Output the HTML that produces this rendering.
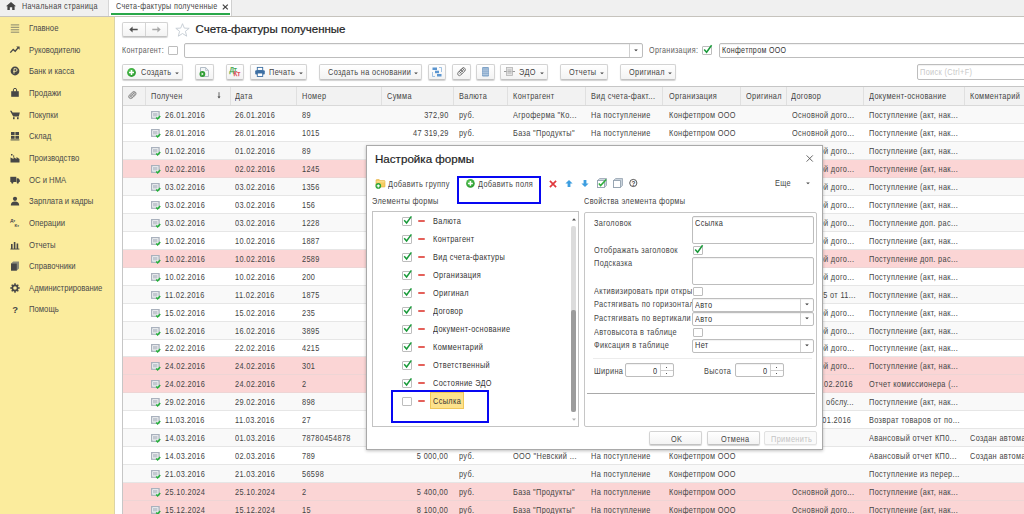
<!DOCTYPE html><html><head><meta charset="utf-8"><style>
*{box-sizing:border-box}
html,body{margin:0;padding:0}
body{width:1024px;height:514px;overflow:hidden;position:relative;background:#fff;font-family:"Liberation Sans",sans-serif;font-size:8px;color:#444}
.t{position:absolute;white-space:nowrap;line-height:10px;font-size:8px}
.btn{position:absolute;height:16px;border:1px solid #d3d3d3;border-bottom-color:#c2c2c2;border-radius:2px;background:linear-gradient(#fff,#f3f3f3);box-shadow:0 1px 1px rgba(0,0,0,.18)}
.cb{position:absolute;width:10px;height:9px;border:1px solid #bdbdbd;border-radius:1px;background:#fff}
.inp{position:absolute;border:1px solid #bdbdbd;border-radius:2px;background:#fff;box-shadow:inset 0 1px 1px rgba(0,0,0,.06)}
svg{position:absolute;overflow:visible}
</style></head><body>
<div style="position:absolute;left:0px;top:0px;width:1024px;height:16px;background:#f0f0f0"></div>
<div style="position:absolute;left:0px;top:16px;width:1024px;height:1px;background:#c6c3bd"></div>
<svg style="left:6px;top:2px" width="10" height="8" viewBox="0 0 10 8"><path d="M5 0 L10 4.2 H8.6 V8 H6.2 V5.3 H3.8 V8 H1.4 V4.2 H0 Z" fill="#444"/></svg>
<div class="t " style="left:22px;top:1px;font-size:9.2px;line-height:10px;transform:scaleX(0.7850);transform-origin:0 0;letter-spacing:0.43px;color:#444;">Начальная страница</div>
<div style="position:absolute;left:108px;top:0px;width:1px;height:16px;background:#d6d6d6"></div>
<div style="position:absolute;left:109px;top:0px;width:122px;height:16px;background:#fff"></div>
<div style="position:absolute;left:231px;top:0px;width:1px;height:16px;background:#d0d0d0"></div>
<div style="position:absolute;left:111px;top:13px;width:119px;height:2px;background:#2aa84a"></div>
<div class="t " style="left:115.5px;top:1px;font-size:9.2px;line-height:10px;transform:scaleX(0.7800);transform-origin:0 0;letter-spacing:0.43px;color:#444;">Счета-фактуры полученные</div>
<svg style="left:221.5px;top:3.5px" width="7" height="6" viewBox="0 0 7 6"><path d="M0.8 0.6 L5.8 5.4 M5.8 0.6 L0.8 5.4" stroke="#444" stroke-width="1.2"/></svg>
<div style="position:absolute;left:0px;top:17px;width:114px;height:497px;background:#fbec9d"></div>
<div style="position:absolute;left:114px;top:17px;width:1px;height:497px;background:#dcd4a4"></div>
<div class="t " style="left:28.5px;top:23px;font-size:8.8px;line-height:10px;transform:scaleX(0.8750);transform-origin:0 0;color:#4a4a4a;">Главное</div>
<svg style="left:10px;top:22.5px" width="10" height="10" viewBox="0 0 10 10"><path d="M0.8 1.9H9.2M0.8 4.3H9.2M0.8 6.8H9.2M0.8 9.2H9.2" stroke="#7a7a6a" stroke-width="0.9"/></svg>
<div class="t " style="left:28.5px;top:45px;font-size:8.8px;line-height:10px;transform:scaleX(0.8750);transform-origin:0 0;color:#4a4a4a;">Руководителю</div>
<svg style="left:10px;top:44.5px" width="10" height="10" viewBox="0 0 10 10"><path d="M0.3 7.6 L3.2 4.4 L5.2 6.2 L8.2 2.6" stroke="#474747" stroke-width="1.4" fill="none"/><path d="M6.2 1.4 H9.6 V4.8Z" fill="#474747"/></svg>
<div class="t " style="left:28.5px;top:66px;font-size:8.8px;line-height:10px;transform:scaleX(0.8750);transform-origin:0 0;color:#4a4a4a;">Банк и касса</div>
<svg style="left:10px;top:65.5px" width="10" height="10" viewBox="0 0 10 10"><circle cx="5" cy="5" r="4.4" fill="#474747"/><path d="M4 7.6V2.6H5.6Q7 2.6 7 4Q7 5.4 5.6 5.4H3.2" stroke="#e8dca0" stroke-width="1" fill="none"/></svg>
<div class="t " style="left:28.5px;top:88px;font-size:8.8px;line-height:10px;transform:scaleX(0.8750);transform-origin:0 0;color:#4a4a4a;">Продажи</div>
<svg style="left:10px;top:87.5px" width="10" height="10" viewBox="0 0 10 10"><path d="M1.2 3.2H8.8V8.8H1.2Z" fill="#474747"/><path d="M3.4 3.8V1.8Q3.4 0.4 5 0.4Q6.6 0.4 6.6 1.8V3.8" stroke="#474747" stroke-width="1" fill="none"/></svg>
<div class="t " style="left:28.5px;top:110px;font-size:8.8px;line-height:10px;transform:scaleX(0.8750);transform-origin:0 0;color:#4a4a4a;">Покупки</div>
<svg style="left:10px;top:109.5px" width="10" height="10" viewBox="0 0 10 10"><path d="M0 0.8H1.6L2.6 2.6H9.8L8.8 6.4H3.2Z" fill="#474747"/><rect x="3" y="7.2" width="1.6" height="2" fill="#474747"/><rect x="7" y="7.2" width="1.6" height="2" fill="#474747"/></svg>
<div class="t " style="left:28.5px;top:131px;font-size:8.8px;line-height:10px;transform:scaleX(0.8750);transform-origin:0 0;color:#4a4a4a;">Склад</div>
<svg style="left:10px;top:130.5px" width="10" height="10" viewBox="0 0 10 10"><rect x="1" y="1" width="3.6" height="3" fill="#474747"/><rect x="5.4" y="1" width="3.6" height="3" fill="#474747"/><rect x="1" y="4.8" width="3.6" height="3" fill="#474747"/><rect x="5.4" y="4.8" width="3.6" height="3" fill="#474747"/><rect x="0.6" y="8.3" width="8.8" height="1.2" fill="#6a6a5a"/></svg>
<div class="t " style="left:28.5px;top:153px;font-size:8.8px;line-height:10px;transform:scaleX(0.8750);transform-origin:0 0;color:#4a4a4a;">Производство</div>
<svg style="left:10px;top:152.5px" width="10" height="10" viewBox="0 0 10 10"><path d="M0.5 9.5V4.5L3.5 6V4L6.5 6V4L9.5 6V9.5Z" fill="#474747"/><rect x="1" y="1" width="1.5" height="1.5" fill="#474747"/><rect x="3" y="2.5" width="1.2" height="1.2" fill="#474747"/></svg>
<div class="t " style="left:28.5px;top:175px;font-size:8.8px;line-height:10px;transform:scaleX(0.8750);transform-origin:0 0;color:#4a4a4a;">ОС и НМА</div>
<svg style="left:10px;top:174.5px" width="10" height="10" viewBox="0 0 10 10"><rect x="0.3" y="1.8" width="6" height="5.2" fill="#474747"/><path d="M6.6 3.2H8.4L9.8 5V7H6.6Z" fill="#474747"/><circle cx="2.3" cy="7.6" r="1.1" fill="#474747"/><circle cx="7.8" cy="7.6" r="1.1" fill="#474747"/></svg>
<div class="t " style="left:28.5px;top:196px;font-size:8.8px;line-height:10px;transform:scaleX(0.8750);transform-origin:0 0;color:#4a4a4a;">Зарплата и кадры</div>
<svg style="left:10px;top:195.5px" width="10" height="10" viewBox="0 0 10 10"><circle cx="5" cy="2.8" r="2.1" fill="#474747"/><path d="M0.8 9.4Q0.8 5.6 5 5.6Q9.2 5.6 9.2 9.4Z" fill="#474747"/></svg>
<div class="t " style="left:28.5px;top:218px;font-size:8.8px;line-height:10px;transform:scaleX(0.8750);transform-origin:0 0;color:#4a4a4a;">Операции</div>
<svg style="left:10px;top:217.5px" width="10" height="10" viewBox="0 0 10 10"><text x="0.2" y="4.4" font-family="Liberation Sans" font-size="4.4" font-weight="bold" fill="#474747">Дт</text><text x="4.4" y="9.2" font-family="Liberation Sans" font-size="4.4" font-weight="bold" fill="#474747">Кт</text></svg>
<div class="t " style="left:28.5px;top:240px;font-size:8.8px;line-height:10px;transform:scaleX(0.8750);transform-origin:0 0;color:#4a4a4a;">Отчеты</div>
<svg style="left:10px;top:239.5px" width="10" height="10" viewBox="0 0 10 10"><rect x="1" y="4" width="1.6" height="5" fill="#474747"/><rect x="3.8" y="2" width="1.6" height="7" fill="#474747"/><rect x="6.6" y="3.5" width="1.6" height="5.5" fill="#474747"/><rect x="0.4" y="8.6" width="9" height="0.9" fill="#474747"/></svg>
<div class="t " style="left:28.5px;top:261px;font-size:8.8px;line-height:10px;transform:scaleX(0.8750);transform-origin:0 0;color:#4a4a4a;">Справочники</div>
<svg style="left:10px;top:260.5px" width="10" height="10" viewBox="0 0 10 10"><path d="M1 2.6L3.2 0.6H9V7.6L6.8 9.6H1Z" fill="#8a8a7a"/><rect x="1" y="2.6" width="5.8" height="7" fill="#474747"/></svg>
<div class="t " style="left:28.5px;top:283px;font-size:8.8px;line-height:10px;transform:scaleX(0.8750);transform-origin:0 0;color:#4a4a4a;">Администрирование</div>
<svg style="left:10px;top:282.5px" width="10" height="10" viewBox="0 0 10 10"><circle cx="5" cy="5" r="2.6" fill="none" stroke="#474747" stroke-width="1.6"/><path d="M5 0.3V2M5 8V9.7M0.3 5H2M8 5H9.7M1.7 1.7L2.9 2.9M7.1 7.1L8.3 8.3M8.3 1.7L7.1 2.9M2.9 7.1L1.7 8.3" stroke="#474747" stroke-width="1.5"/></svg>
<div class="t " style="left:28.5px;top:304px;font-size:8.8px;line-height:10px;transform:scaleX(0.8750);transform-origin:0 0;color:#4a4a4a;">Помощь</div>
<svg style="left:10px;top:303.5px" width="10" height="10" viewBox="0 0 10 10"><text x="2.2" y="9" font-family="Liberation Sans" font-size="9.5" font-weight="bold" fill="#474747">?</text></svg>
<div class="btn" style="left:122px;top:22px;width:46px;height:15px"></div>
<div style="position:absolute;left:145px;top:23px;width:1px;height:13px;background:#d4d4d4"></div>
<svg style="left:129px;top:26px" width="9" height="7" viewBox="0 0 9 7"><path d="M0.3 3.5 L3.6 0.4 V2.7 H8.7 V4.3 H3.6 V6.6 Z" fill="#505050"/></svg>
<svg style="left:151.5px;top:26px" width="9" height="7" viewBox="0 0 9 7"><path d="M8.7 3.5 L5.4 0.4 V2.7 H0.3 V4.3 H5.4 V6.6 Z" fill="#a8a8a8"/></svg>
<svg style="left:174.5px;top:22.5px" width="15" height="14" viewBox="0 0 15 14"><path d="M7.5 0.7 L9.3 5.1 L14.2 5.3 L10.4 8.3 L11.7 13.2 L7.5 10.5 L3.3 13.2 L4.6 8.3 L0.8 5.3 L5.7 5.1 Z" fill="none" stroke="#c3cbd3" stroke-width="0.9" stroke-linejoin="miter"/></svg>
<div class="t " style="left:195.5px;top:23px;font-size:11.5px;line-height:12px;color:#1e1e1e;-webkit-text-stroke:0.2px #1e1e1e;">Счета-фактуры полученные</div>
<div class="t " style="left:122px;top:45px;font-size:9.2px;line-height:10px;transform:scaleX(0.7650);transform-origin:0 0;letter-spacing:0.43px;color:#606060;">Контрагент:</div>
<div class="cb" style="left:168px;top:46px"></div>
<div class="inp" style="left:184px;top:43px;width:459px;height:15px"></div>
<div style="position:absolute;left:629px;top:44px;width:1px;height:13px;background:#d0d0d0"></div>
<div class="t " style="left:649.2px;top:45px;font-size:9.2px;line-height:10px;transform:scaleX(0.7800);transform-origin:0 0;letter-spacing:0.43px;color:#606060;">Организация:</div>
<div class="cb" style="left:702px;top:46px"></div>
<svg style="left:703px;top:44px" width="10" height="10" viewBox="0 0 10 10"><path d="M1.2 5.4 L3.6 8.2 L8.6 1.2" stroke="#1a9a3a" stroke-width="1.5" fill="none"/></svg>
<svg style="left:634px;top:49px" width="4" height="3" viewBox="0 0 4 3"><path d="M0.2 0.4H3.8L2 2.3Z" fill="#333"/></svg>
<div class="inp" style="left:719px;top:43px;width:320px;height:15px"></div>
<div class="t " style="left:721.5px;top:45px;font-size:9.2px;line-height:10px;transform:scaleX(0.7700);transform-origin:0 0;letter-spacing:0.43px;color:#333;">Конфетпром ООО</div>
<div class="btn" style="left:122px;top:64px;width:61px"></div>
<div class="t " style="left:140.5px;top:67px;font-size:9.2px;line-height:10px;transform:scaleX(0.8000);transform-origin:0 0;letter-spacing:0.43px;color:#444;">Создать</div>
<svg style="left:175px;top:72px" width="4" height="3" viewBox="0 0 4 3"><path d="M0.2 0.4H3.8L2 2.3Z" fill="#444"/></svg>
<svg style="left:127px;top:67.5px" width="9" height="9" viewBox="0 0 9 9"><defs><radialGradient id="gp" cx="40%" cy="35%" r="65%"><stop offset="0" stop-color="#5cc95a"/><stop offset="1" stop-color="#2a9a2f"/></radialGradient></defs><circle cx="4.5" cy="4.5" r="4.4" fill="url(#gp)"/><path d="M4.5 2V7M2 4.5H7" stroke="#fff" stroke-width="1.5"/></svg>
<div class="btn" style="left:195px;top:64px;width:19px"></div>
<svg style="left:199px;top:67px" width="11" height="10" viewBox="0 0 11 10"><path d="M1.5 0.5H6.6L9.5 3.4V9.5H1.5Z" fill="#f4f6f8" stroke="#a9b4c0" stroke-width="0.9"/><path d="M6.6 0.5V3.4H9.5" fill="none" stroke="#a9b4c0" stroke-width="0.7"/><circle cx="3.4" cy="7" r="2.9" fill="#2f9e34"/><path d="M2.6 5.6V8.4L4.6 7Z" fill="#fff"/></svg>
<div class="btn" style="left:226px;top:64px;width:18px"></div>
<svg style="left:229px;top:66px" width="12" height="11" viewBox="0 0 12 11"><text x="0.4" y="5.8" font-family="Liberation Sans" font-size="6.6" fill="#3aa54a" stroke="#3aa54a" stroke-width="0.25">Дт</text><text x="4.4" y="10.2" font-family="Liberation Sans" font-size="6.6" fill="#e0454d" stroke="#e0454d" stroke-width="0.25">Кт</text></svg>
<div class="btn" style="left:250px;top:64px;width:57px"></div>
<div class="t " style="left:268.5px;top:67px;font-size:9.2px;line-height:10px;transform:scaleX(0.8000);transform-origin:0 0;letter-spacing:0.43px;color:#444;">Печать</div>
<svg style="left:299px;top:72px" width="4" height="3" viewBox="0 0 4 3"><path d="M0.2 0.4H3.8L2 2.3Z" fill="#444"/></svg>
<svg style="left:255px;top:67px" width="10" height="10" viewBox="0 0 10 10"><rect x="2.3" y="0.4" width="5.4" height="3" fill="#fff" stroke="#3d6fa3" stroke-width="0.9"/><rect x="0.2" y="3.2" width="9.6" height="4.4" rx="1" fill="#3d6fa3"/><rect x="2.3" y="6" width="5.4" height="3.5" fill="#fff" stroke="#3d6fa3" stroke-width="0.9"/></svg>
<div class="btn" style="left:319px;top:64px;width:103px"></div>
<div class="t " style="left:328px;top:67px;font-size:9.2px;line-height:10px;transform:scaleX(0.8000);transform-origin:0 0;letter-spacing:0.43px;color:#444;">Создать на основании</div>
<svg style="left:414px;top:72px" width="4" height="3" viewBox="0 0 4 3"><path d="M0.2 0.4H3.8L2 2.3Z" fill="#444"/></svg>
<div class="btn" style="left:428px;top:64px;width:18px"></div>
<svg style="left:432px;top:67px" width="10" height="10" viewBox="0 0 10 10"><rect x="0.5" y="0.5" width="4.5" height="2.5" fill="#5b95d0"/><rect x="3" y="3.7" width="4" height="2.5" fill="#5b95d0"/><rect x="5" y="7" width="4.5" height="2.5" fill="#5b95d0"/><path d="M0.5 5V9.5H3 M9.5 5V0.5H7" stroke="#8cb4dc" stroke-width="0.8" fill="none"/></svg>
<div class="btn" style="left:452px;top:64px;width:19px"></div>
<svg style="left:456px;top:66px" width="10" height="11" viewBox="0 0 10 11"><path d="M7.5 1.2 L2.2 6.5 Q1 7.9 2.2 9.1 Q3.5 10.3 4.8 9 L9 4.8 Q10 3.4 8.8 2.3 Q7.6 1.2 6.3 2.4 L2.5 6.3 M7.8 3.4 L3.6 7.6 M6 2.1L8.5 4.6 M4.5 3.6 L7 6.1 M3 5.1 L5.5 7.6" stroke="#6b6b6b" stroke-width="0.9" fill="none"/></svg>
<div class="btn" style="left:476px;top:64px;width:19px"></div>
<svg style="left:482px;top:67px" width="7" height="10" viewBox="0 0 7 10"><rect x="0" y="0" width="7" height="9.5" rx="1.2" fill="#7fa3c8"/><path d="M0.5 2H6.5M0.5 3.9H6.5M0.5 5.8H6.5M0.5 7.7H6.5" stroke="#d8e4f0" stroke-width="0.7"/></svg>
<div class="btn" style="left:500px;top:64px;width:48px"></div>
<div class="t " style="left:519px;top:67px;font-size:9.2px;line-height:10px;transform:scaleX(0.8000);transform-origin:0 0;letter-spacing:0.43px;color:#444;">ЭДО</div>
<svg style="left:540px;top:72px" width="4" height="3" viewBox="0 0 4 3"><path d="M0.2 0.4H3.8L2 2.3Z" fill="#444"/></svg>
<svg style="left:504px;top:67px" width="11" height="9" viewBox="0 0 11 9"><rect x="2.5" y="0.5" width="6" height="8" fill="#e4e4e4" stroke="#b4b4b4" stroke-width="0.8"/><path d="M3.5 3H7.5M3.5 4.5H7.5M3.5 6H7.5" stroke="#a0a0a0" stroke-width="0.7"/><path d="M0 4.5H2.5M8.5 4.5H11" stroke="#9a9a9a" stroke-width="1"/></svg>
<div class="btn" style="left:560px;top:64px;width:48px"></div>
<div class="t " style="left:569px;top:67px;font-size:9.2px;line-height:10px;transform:scaleX(0.8000);transform-origin:0 0;letter-spacing:0.43px;color:#444;">Отчеты</div>
<svg style="left:600px;top:72px" width="4" height="3" viewBox="0 0 4 3"><path d="M0.2 0.4H3.8L2 2.3Z" fill="#444"/></svg>
<div class="btn" style="left:620px;top:64px;width:56px"></div>
<div class="t " style="left:629px;top:67px;font-size:9.2px;line-height:10px;transform:scaleX(0.8000);transform-origin:0 0;letter-spacing:0.43px;color:#444;">Оригинал</div>
<svg style="left:667.5px;top:72px" width="4" height="3" viewBox="0 0 4 3"><path d="M0.2 0.4H3.8L2 2.3Z" fill="#444"/></svg>
<div class="inp" style="left:917px;top:64px;width:120px;height:16px"></div>
<div class="t " style="left:920px;top:67px;font-size:9.2px;line-height:10px;transform:scaleX(0.8000);transform-origin:0 0;letter-spacing:0.43px;color:#c8c8c8;">Поиск (Ctrl+F)</div>
<div style="position:absolute;left:122px;top:86px;width:910px;height:1px;background:#c6c6c6"></div>
<div style="position:absolute;left:122px;top:87px;width:910px;height:18px;background:#f2f2f2"></div>
<div style="position:absolute;left:122px;top:105px;width:910px;height:1px;background:#d9d9d9"></div>
<div style="position:absolute;left:122px;top:86px;width:1px;height:428px;background:#c6c6c6"></div>
<div style="position:absolute;left:145px;top:87px;width:1px;height:18px;background:#e0e0e0"></div>
<div style="position:absolute;left:230px;top:87px;width:1px;height:18px;background:#e0e0e0"></div>
<div style="position:absolute;left:296px;top:87px;width:1px;height:18px;background:#e0e0e0"></div>
<div style="position:absolute;left:381px;top:87px;width:1px;height:18px;background:#e0e0e0"></div>
<div style="position:absolute;left:453px;top:87px;width:1px;height:18px;background:#e0e0e0"></div>
<div style="position:absolute;left:507px;top:87px;width:1px;height:18px;background:#e0e0e0"></div>
<div style="position:absolute;left:585px;top:87px;width:1px;height:18px;background:#e0e0e0"></div>
<div style="position:absolute;left:662px;top:87px;width:1px;height:18px;background:#e0e0e0"></div>
<div style="position:absolute;left:740px;top:87px;width:1px;height:18px;background:#e0e0e0"></div>
<div style="position:absolute;left:786px;top:87px;width:1px;height:18px;background:#e0e0e0"></div>
<div style="position:absolute;left:863px;top:87px;width:1px;height:18px;background:#e0e0e0"></div>
<div style="position:absolute;left:964px;top:87px;width:1px;height:18px;background:#e0e0e0"></div>
<div class="t " style="left:150.7px;top:91px;font-size:9.2px;line-height:10px;transform:scaleX(0.8000);transform-origin:0 0;letter-spacing:0.43px;color:#444;">Получен</div>
<div class="t " style="left:234.5px;top:91px;font-size:9.2px;line-height:10px;transform:scaleX(0.8000);transform-origin:0 0;letter-spacing:0.43px;color:#444;">Дата</div>
<div class="t " style="left:301.7px;top:91px;font-size:9.2px;line-height:10px;transform:scaleX(0.8000);transform-origin:0 0;letter-spacing:0.43px;color:#444;">Номер</div>
<div class="t " style="left:386.7px;top:91px;font-size:9.2px;line-height:10px;transform:scaleX(0.8000);transform-origin:0 0;letter-spacing:0.43px;color:#444;">Сумма</div>
<div class="t " style="left:459px;top:91px;font-size:9.2px;line-height:10px;transform:scaleX(0.8000);transform-origin:0 0;letter-spacing:0.43px;color:#444;">Валюта</div>
<div class="t " style="left:513.3px;top:91px;font-size:9.2px;line-height:10px;transform:scaleX(0.8000);transform-origin:0 0;letter-spacing:0.43px;color:#444;">Контрагент</div>
<div class="t " style="left:590.8px;top:91px;font-size:9.2px;line-height:10px;transform:scaleX(0.8000);transform-origin:0 0;letter-spacing:0.43px;color:#444;">Вид счета-факт...</div>
<div class="t " style="left:668.5px;top:91px;font-size:9.2px;line-height:10px;transform:scaleX(0.8000);transform-origin:0 0;letter-spacing:0.43px;color:#444;">Организация</div>
<div class="t " style="left:745.5px;top:91px;font-size:9.2px;line-height:10px;transform:scaleX(0.8000);transform-origin:0 0;letter-spacing:0.43px;color:#444;">Оригинал</div>
<div class="t " style="left:791px;top:91px;font-size:9.2px;line-height:10px;transform:scaleX(0.8000);transform-origin:0 0;letter-spacing:0.43px;color:#444;">Договор</div>
<div class="t " style="left:868.5px;top:91px;font-size:9.2px;line-height:10px;transform:scaleX(0.8000);transform-origin:0 0;letter-spacing:0.43px;color:#444;">Документ-основание</div>
<div class="t " style="left:969.5px;top:91px;font-size:9.2px;line-height:10px;transform:scaleX(0.8000);transform-origin:0 0;letter-spacing:0.43px;color:#444;">Комментарий</div>
<svg style="left:216.5px;top:92px" width="4" height="7" viewBox="0 0 4 7"><path d="M2 0.2V5" stroke="#555" stroke-width="0.9"/><path d="M0.5 4.4 H3.5 L2 6.4Z" fill="#444"/></svg>
<svg style="left:128px;top:91px" width="9" height="8" viewBox="0 0 9 8"><path d="M6.8 0.8 Q8.6 1.4 8 3.2 L4.2 7 Q2.6 8.2 1.2 7 Q0 5.6 1.2 4.2 L5 0.8 Q5.9 0.2 6.8 0.8Z" fill="#d0d0d0" stroke="#777" stroke-width="0.8"/><path d="M2 4.4 L4.8 7 M3.4 3 L6.4 5.6 M4.8 1.6 L7.6 4.2 M1.8 6 L6.8 1.2" stroke="#777" stroke-width="0.6"/></svg>
<div style="position:absolute;left:123px;top:106px;width:901px;height:17px;background:#f9f9f9"></div>
<div style="position:absolute;left:123px;top:123px;width:901px;height:1px;background:#e6e6e6"></div>
<svg style="left:151px;top:110.5px" width="10" height="9" viewBox="0 0 10 9"><rect x="0.65" y="0.65" width="7.4" height="6.6" fill="#fff" stroke="#a9b1bd" stroke-width="1.3"/><rect x="2" y="2" width="4.6" height="3.6" fill="#c2c8d0"/><path d="M5.2 6.5 L6.6 7.9 L9.2 4.9" stroke="#25b03a" stroke-width="1.5" fill="none"/></svg>
<div class="t " style="left:165px;top:110px;font-size:9.2px;line-height:10px;transform:scaleX(0.8000);transform-origin:0 0;letter-spacing:0.43px;">26.01.2016</div>
<div class="t " style="left:234.5px;top:110px;font-size:9.2px;line-height:10px;transform:scaleX(0.8000);transform-origin:0 0;letter-spacing:0.43px;">26.01.2016</div>
<div class="t " style="left:301.7px;top:110px;font-size:9.2px;line-height:10px;transform:scaleX(0.8000);transform-origin:0 0;letter-spacing:0.43px;">89</div>
<div class="t " style="right:575.5px;top:110px;font-size:9.2px;line-height:10px;transform:scaleX(0.8000);transform-origin:100% 0;letter-spacing:0.43px;">372,90</div>
<div class="t " style="left:459px;top:110px;font-size:9.2px;line-height:10px;transform:scaleX(0.8000);transform-origin:0 0;letter-spacing:0.43px;">руб.</div>
<div class="t " style="left:513.3px;top:110px;font-size:9.2px;line-height:10px;transform:scaleX(0.8000);transform-origin:0 0;letter-spacing:0.43px;">Агроферма &quot;Ко...</div>
<div class="t " style="left:590.8px;top:110px;font-size:9.2px;line-height:10px;transform:scaleX(0.8000);transform-origin:0 0;letter-spacing:0.43px;">На поступление</div>
<div class="t " style="left:668.5px;top:110px;font-size:9.2px;line-height:10px;transform:scaleX(0.8000);transform-origin:0 0;letter-spacing:0.43px;">Конфетпром ООО</div>
<div class="t " style="left:792px;top:110px;font-size:9.2px;line-height:10px;transform:scaleX(0.8000);transform-origin:0 0;letter-spacing:0.43px;">Основной дого...</div>
<div class="t " style="left:868.5px;top:110px;font-size:9.2px;line-height:10px;transform:scaleX(0.8000);transform-origin:0 0;letter-spacing:0.43px;">Поступление (акт, нак...</div>
<div style="position:absolute;left:123px;top:124px;width:901px;height:17px;background:#ffffff"></div>
<div style="position:absolute;left:123px;top:141px;width:901px;height:1px;background:#e6e6e6"></div>
<svg style="left:151px;top:128.5px" width="10" height="9" viewBox="0 0 10 9"><rect x="0.65" y="0.65" width="7.4" height="6.6" fill="#fff" stroke="#a9b1bd" stroke-width="1.3"/><rect x="2" y="2" width="4.6" height="3.6" fill="#c2c8d0"/><path d="M5.2 6.5 L6.6 7.9 L9.2 4.9" stroke="#25b03a" stroke-width="1.5" fill="none"/></svg>
<div class="t " style="left:165px;top:128px;font-size:9.2px;line-height:10px;transform:scaleX(0.8000);transform-origin:0 0;letter-spacing:0.43px;">28.01.2016</div>
<div class="t " style="left:234.5px;top:128px;font-size:9.2px;line-height:10px;transform:scaleX(0.8000);transform-origin:0 0;letter-spacing:0.43px;">28.01.2016</div>
<div class="t " style="left:301.7px;top:128px;font-size:9.2px;line-height:10px;transform:scaleX(0.8000);transform-origin:0 0;letter-spacing:0.43px;">1015</div>
<div class="t " style="right:575.5px;top:128px;font-size:9.2px;line-height:10px;transform:scaleX(0.8000);transform-origin:100% 0;letter-spacing:0.43px;">47 319,29</div>
<div class="t " style="left:459px;top:128px;font-size:9.2px;line-height:10px;transform:scaleX(0.8000);transform-origin:0 0;letter-spacing:0.43px;">руб.</div>
<div class="t " style="left:513.3px;top:128px;font-size:9.2px;line-height:10px;transform:scaleX(0.8000);transform-origin:0 0;letter-spacing:0.43px;">База &quot;Продукты&quot;</div>
<div class="t " style="left:590.8px;top:128px;font-size:9.2px;line-height:10px;transform:scaleX(0.8000);transform-origin:0 0;letter-spacing:0.43px;">На поступление</div>
<div class="t " style="left:668.5px;top:128px;font-size:9.2px;line-height:10px;transform:scaleX(0.8000);transform-origin:0 0;letter-spacing:0.43px;">Конфетпром ООО</div>
<div class="t " style="left:792px;top:128px;font-size:9.2px;line-height:10px;transform:scaleX(0.8000);transform-origin:0 0;letter-spacing:0.43px;">Основной дого...</div>
<div class="t " style="left:868.5px;top:128px;font-size:9.2px;line-height:10px;transform:scaleX(0.8000);transform-origin:0 0;letter-spacing:0.43px;">Поступление (акт, нак...</div>
<div style="position:absolute;left:123px;top:142px;width:901px;height:17px;background:#f9f9f9"></div>
<div style="position:absolute;left:123px;top:159px;width:901px;height:1px;background:#e6e6e6"></div>
<svg style="left:151px;top:146.5px" width="10" height="9" viewBox="0 0 10 9"><rect x="0.65" y="0.65" width="7.4" height="6.6" fill="#fff" stroke="#a9b1bd" stroke-width="1.3"/><rect x="2" y="2" width="4.6" height="3.6" fill="#c2c8d0"/><path d="M5.2 6.5 L6.6 7.9 L9.2 4.9" stroke="#25b03a" stroke-width="1.5" fill="none"/></svg>
<div class="t " style="left:165px;top:146px;font-size:9.2px;line-height:10px;transform:scaleX(0.8000);transform-origin:0 0;letter-spacing:0.43px;">01.02.2016</div>
<div class="t " style="left:234.5px;top:146px;font-size:9.2px;line-height:10px;transform:scaleX(0.8000);transform-origin:0 0;letter-spacing:0.43px;">01.02.2016</div>
<div class="t " style="left:301.7px;top:146px;font-size:9.2px;line-height:10px;transform:scaleX(0.8000);transform-origin:0 0;letter-spacing:0.43px;">89</div>
<div class="t " style="left:459px;top:146px;font-size:9.2px;line-height:10px;transform:scaleX(0.8000);transform-origin:0 0;letter-spacing:0.43px;">руб.</div>
<div class="t " style="left:590.8px;top:146px;font-size:9.2px;line-height:10px;transform:scaleX(0.8000);transform-origin:0 0;letter-spacing:0.43px;">На поступление</div>
<div class="t " style="left:668.5px;top:146px;font-size:9.2px;line-height:10px;transform:scaleX(0.8000);transform-origin:0 0;letter-spacing:0.43px;">Конфетпром ООО</div>
<div class="t " style="left:792px;top:146px;font-size:9.2px;line-height:10px;transform:scaleX(0.8000);transform-origin:0 0;letter-spacing:0.43px;">Основной дого...</div>
<div class="t " style="left:868.5px;top:146px;font-size:9.2px;line-height:10px;transform:scaleX(0.8000);transform-origin:0 0;letter-spacing:0.43px;">Поступление (акт, нак...</div>
<div style="position:absolute;left:123px;top:160px;width:901px;height:17px;background:#fbd5d5"></div>
<div style="position:absolute;left:123px;top:177px;width:901px;height:1px;background:#eed5d5"></div>
<svg style="left:151px;top:164.5px" width="10" height="9" viewBox="0 0 10 9"><rect x="0.65" y="0.65" width="7.4" height="6.6" fill="#fff" stroke="#a9b1bd" stroke-width="1.3"/><rect x="2" y="2" width="4.6" height="3.6" fill="#c2c8d0"/><path d="M5.2 6.5 L6.6 7.9 L9.2 4.9" stroke="#25b03a" stroke-width="1.5" fill="none"/></svg>
<div class="t " style="left:165px;top:164px;font-size:9.2px;line-height:10px;transform:scaleX(0.8000);transform-origin:0 0;letter-spacing:0.43px;">02.02.2016</div>
<div class="t " style="left:234.5px;top:164px;font-size:9.2px;line-height:10px;transform:scaleX(0.8000);transform-origin:0 0;letter-spacing:0.43px;">02.02.2016</div>
<div class="t " style="left:301.7px;top:164px;font-size:9.2px;line-height:10px;transform:scaleX(0.8000);transform-origin:0 0;letter-spacing:0.43px;">1245</div>
<div class="t " style="left:459px;top:164px;font-size:9.2px;line-height:10px;transform:scaleX(0.8000);transform-origin:0 0;letter-spacing:0.43px;">руб.</div>
<div class="t " style="left:590.8px;top:164px;font-size:9.2px;line-height:10px;transform:scaleX(0.8000);transform-origin:0 0;letter-spacing:0.43px;">На поступление</div>
<div class="t " style="left:668.5px;top:164px;font-size:9.2px;line-height:10px;transform:scaleX(0.8000);transform-origin:0 0;letter-spacing:0.43px;">Конфетпром ООО</div>
<div class="t " style="left:792px;top:164px;font-size:9.2px;line-height:10px;transform:scaleX(0.8000);transform-origin:0 0;letter-spacing:0.43px;">Основной дого...</div>
<div class="t " style="left:868.5px;top:164px;font-size:9.2px;line-height:10px;transform:scaleX(0.8000);transform-origin:0 0;letter-spacing:0.43px;">Поступление (акт, нак...</div>
<div style="position:absolute;left:123px;top:178px;width:901px;height:17px;background:#f9f9f9"></div>
<div style="position:absolute;left:123px;top:195px;width:901px;height:1px;background:#e6e6e6"></div>
<svg style="left:151px;top:182.5px" width="10" height="9" viewBox="0 0 10 9"><rect x="0.65" y="0.65" width="7.4" height="6.6" fill="#fff" stroke="#a9b1bd" stroke-width="1.3"/><rect x="2" y="2" width="4.6" height="3.6" fill="#c2c8d0"/><path d="M5.2 6.5 L6.6 7.9 L9.2 4.9" stroke="#25b03a" stroke-width="1.5" fill="none"/></svg>
<div class="t " style="left:165px;top:182px;font-size:9.2px;line-height:10px;transform:scaleX(0.8000);transform-origin:0 0;letter-spacing:0.43px;">03.02.2016</div>
<div class="t " style="left:234.5px;top:182px;font-size:9.2px;line-height:10px;transform:scaleX(0.8000);transform-origin:0 0;letter-spacing:0.43px;">03.02.2016</div>
<div class="t " style="left:301.7px;top:182px;font-size:9.2px;line-height:10px;transform:scaleX(0.8000);transform-origin:0 0;letter-spacing:0.43px;">1356</div>
<div class="t " style="left:459px;top:182px;font-size:9.2px;line-height:10px;transform:scaleX(0.8000);transform-origin:0 0;letter-spacing:0.43px;">руб.</div>
<div class="t " style="left:590.8px;top:182px;font-size:9.2px;line-height:10px;transform:scaleX(0.8000);transform-origin:0 0;letter-spacing:0.43px;">На поступление</div>
<div class="t " style="left:668.5px;top:182px;font-size:9.2px;line-height:10px;transform:scaleX(0.8000);transform-origin:0 0;letter-spacing:0.43px;">Конфетпром ООО</div>
<div class="t " style="left:792px;top:182px;font-size:9.2px;line-height:10px;transform:scaleX(0.8000);transform-origin:0 0;letter-spacing:0.43px;">Основной дого...</div>
<div class="t " style="left:868.5px;top:182px;font-size:9.2px;line-height:10px;transform:scaleX(0.8000);transform-origin:0 0;letter-spacing:0.43px;">Поступление (акт, нак...</div>
<div style="position:absolute;left:123px;top:196px;width:901px;height:17px;background:#ffffff"></div>
<div style="position:absolute;left:123px;top:213px;width:901px;height:1px;background:#e6e6e6"></div>
<svg style="left:151px;top:200.5px" width="10" height="9" viewBox="0 0 10 9"><rect x="0.65" y="0.65" width="7.4" height="6.6" fill="#fff" stroke="#a9b1bd" stroke-width="1.3"/><rect x="2" y="2" width="4.6" height="3.6" fill="#c2c8d0"/><path d="M5.2 6.5 L6.6 7.9 L9.2 4.9" stroke="#25b03a" stroke-width="1.5" fill="none"/></svg>
<div class="t " style="left:165px;top:200px;font-size:9.2px;line-height:10px;transform:scaleX(0.8000);transform-origin:0 0;letter-spacing:0.43px;">03.02.2016</div>
<div class="t " style="left:234.5px;top:200px;font-size:9.2px;line-height:10px;transform:scaleX(0.8000);transform-origin:0 0;letter-spacing:0.43px;">03.02.2016</div>
<div class="t " style="left:301.7px;top:200px;font-size:9.2px;line-height:10px;transform:scaleX(0.8000);transform-origin:0 0;letter-spacing:0.43px;">156</div>
<div class="t " style="left:459px;top:200px;font-size:9.2px;line-height:10px;transform:scaleX(0.8000);transform-origin:0 0;letter-spacing:0.43px;">руб.</div>
<div class="t " style="left:590.8px;top:200px;font-size:9.2px;line-height:10px;transform:scaleX(0.8000);transform-origin:0 0;letter-spacing:0.43px;">На поступление</div>
<div class="t " style="left:668.5px;top:200px;font-size:9.2px;line-height:10px;transform:scaleX(0.8000);transform-origin:0 0;letter-spacing:0.43px;">Конфетпром ООО</div>
<div class="t " style="left:792px;top:200px;font-size:9.2px;line-height:10px;transform:scaleX(0.8000);transform-origin:0 0;letter-spacing:0.43px;">Основной дого...</div>
<div class="t " style="left:868.5px;top:200px;font-size:9.2px;line-height:10px;transform:scaleX(0.8000);transform-origin:0 0;letter-spacing:0.43px;">Поступление (акт, нак...</div>
<div style="position:absolute;left:123px;top:214px;width:901px;height:17px;background:#f9f9f9"></div>
<div style="position:absolute;left:123px;top:231px;width:901px;height:1px;background:#e6e6e6"></div>
<svg style="left:151px;top:218.5px" width="10" height="9" viewBox="0 0 10 9"><rect x="0.65" y="0.65" width="7.4" height="6.6" fill="#fff" stroke="#a9b1bd" stroke-width="1.3"/><rect x="2" y="2" width="4.6" height="3.6" fill="#c2c8d0"/><path d="M5.2 6.5 L6.6 7.9 L9.2 4.9" stroke="#25b03a" stroke-width="1.5" fill="none"/></svg>
<div class="t " style="left:165px;top:218px;font-size:9.2px;line-height:10px;transform:scaleX(0.8000);transform-origin:0 0;letter-spacing:0.43px;">03.02.2016</div>
<div class="t " style="left:234.5px;top:218px;font-size:9.2px;line-height:10px;transform:scaleX(0.8000);transform-origin:0 0;letter-spacing:0.43px;">03.02.2016</div>
<div class="t " style="left:301.7px;top:218px;font-size:9.2px;line-height:10px;transform:scaleX(0.8000);transform-origin:0 0;letter-spacing:0.43px;">1228</div>
<div class="t " style="left:459px;top:218px;font-size:9.2px;line-height:10px;transform:scaleX(0.8000);transform-origin:0 0;letter-spacing:0.43px;">руб.</div>
<div class="t " style="left:590.8px;top:218px;font-size:9.2px;line-height:10px;transform:scaleX(0.8000);transform-origin:0 0;letter-spacing:0.43px;">На поступление</div>
<div class="t " style="left:668.5px;top:218px;font-size:9.2px;line-height:10px;transform:scaleX(0.8000);transform-origin:0 0;letter-spacing:0.43px;">Конфетпром ООО</div>
<div class="t " style="left:792px;top:218px;font-size:9.2px;line-height:10px;transform:scaleX(0.8000);transform-origin:0 0;letter-spacing:0.43px;">Основной дого...</div>
<div class="t " style="left:868.5px;top:218px;font-size:9.2px;line-height:10px;transform:scaleX(0.8000);transform-origin:0 0;letter-spacing:0.43px;">Поступление доп. рас...</div>
<div style="position:absolute;left:123px;top:232px;width:901px;height:17px;background:#ffffff"></div>
<div style="position:absolute;left:123px;top:249px;width:901px;height:1px;background:#e6e6e6"></div>
<svg style="left:151px;top:236.5px" width="10" height="9" viewBox="0 0 10 9"><rect x="0.65" y="0.65" width="7.4" height="6.6" fill="#fff" stroke="#a9b1bd" stroke-width="1.3"/><rect x="2" y="2" width="4.6" height="3.6" fill="#c2c8d0"/><path d="M5.2 6.5 L6.6 7.9 L9.2 4.9" stroke="#25b03a" stroke-width="1.5" fill="none"/></svg>
<div class="t " style="left:165px;top:236px;font-size:9.2px;line-height:10px;transform:scaleX(0.8000);transform-origin:0 0;letter-spacing:0.43px;">10.02.2016</div>
<div class="t " style="left:234.5px;top:236px;font-size:9.2px;line-height:10px;transform:scaleX(0.8000);transform-origin:0 0;letter-spacing:0.43px;">10.02.2016</div>
<div class="t " style="left:301.7px;top:236px;font-size:9.2px;line-height:10px;transform:scaleX(0.8000);transform-origin:0 0;letter-spacing:0.43px;">1887</div>
<div class="t " style="left:459px;top:236px;font-size:9.2px;line-height:10px;transform:scaleX(0.8000);transform-origin:0 0;letter-spacing:0.43px;">руб.</div>
<div class="t " style="left:590.8px;top:236px;font-size:9.2px;line-height:10px;transform:scaleX(0.8000);transform-origin:0 0;letter-spacing:0.43px;">На поступление</div>
<div class="t " style="left:668.5px;top:236px;font-size:9.2px;line-height:10px;transform:scaleX(0.8000);transform-origin:0 0;letter-spacing:0.43px;">Конфетпром ООО</div>
<div class="t " style="left:792px;top:236px;font-size:9.2px;line-height:10px;transform:scaleX(0.8000);transform-origin:0 0;letter-spacing:0.43px;">Основной дого...</div>
<div class="t " style="left:868.5px;top:236px;font-size:9.2px;line-height:10px;transform:scaleX(0.8000);transform-origin:0 0;letter-spacing:0.43px;">Поступление (акт, нак...</div>
<div style="position:absolute;left:123px;top:250px;width:901px;height:17px;background:#fbd5d5"></div>
<div style="position:absolute;left:123px;top:267px;width:901px;height:1px;background:#eed5d5"></div>
<svg style="left:151px;top:254.5px" width="10" height="9" viewBox="0 0 10 9"><rect x="0.65" y="0.65" width="7.4" height="6.6" fill="#fff" stroke="#a9b1bd" stroke-width="1.3"/><rect x="2" y="2" width="4.6" height="3.6" fill="#c2c8d0"/><path d="M5.2 6.5 L6.6 7.9 L9.2 4.9" stroke="#25b03a" stroke-width="1.5" fill="none"/></svg>
<div class="t " style="left:165px;top:254px;font-size:9.2px;line-height:10px;transform:scaleX(0.8000);transform-origin:0 0;letter-spacing:0.43px;">10.02.2016</div>
<div class="t " style="left:234.5px;top:254px;font-size:9.2px;line-height:10px;transform:scaleX(0.8000);transform-origin:0 0;letter-spacing:0.43px;">10.02.2016</div>
<div class="t " style="left:301.7px;top:254px;font-size:9.2px;line-height:10px;transform:scaleX(0.8000);transform-origin:0 0;letter-spacing:0.43px;">2589</div>
<div class="t " style="left:459px;top:254px;font-size:9.2px;line-height:10px;transform:scaleX(0.8000);transform-origin:0 0;letter-spacing:0.43px;">руб.</div>
<div class="t " style="left:590.8px;top:254px;font-size:9.2px;line-height:10px;transform:scaleX(0.8000);transform-origin:0 0;letter-spacing:0.43px;">На поступление</div>
<div class="t " style="left:668.5px;top:254px;font-size:9.2px;line-height:10px;transform:scaleX(0.8000);transform-origin:0 0;letter-spacing:0.43px;">Конфетпром ООО</div>
<div class="t " style="left:792px;top:254px;font-size:9.2px;line-height:10px;transform:scaleX(0.8000);transform-origin:0 0;letter-spacing:0.43px;">Основной дого...</div>
<div class="t " style="left:868.5px;top:254px;font-size:9.2px;line-height:10px;transform:scaleX(0.8000);transform-origin:0 0;letter-spacing:0.43px;">Поступление доп. рас...</div>
<div style="position:absolute;left:123px;top:268px;width:901px;height:17px;background:#ffffff"></div>
<div style="position:absolute;left:123px;top:285px;width:901px;height:1px;background:#e6e6e6"></div>
<svg style="left:151px;top:272.5px" width="10" height="9" viewBox="0 0 10 9"><rect x="0.65" y="0.65" width="7.4" height="6.6" fill="#fff" stroke="#a9b1bd" stroke-width="1.3"/><rect x="2" y="2" width="4.6" height="3.6" fill="#c2c8d0"/><path d="M5.2 6.5 L6.6 7.9 L9.2 4.9" stroke="#25b03a" stroke-width="1.5" fill="none"/></svg>
<div class="t " style="left:165px;top:272px;font-size:9.2px;line-height:10px;transform:scaleX(0.8000);transform-origin:0 0;letter-spacing:0.43px;">10.02.2016</div>
<div class="t " style="left:234.5px;top:272px;font-size:9.2px;line-height:10px;transform:scaleX(0.8000);transform-origin:0 0;letter-spacing:0.43px;">10.02.2016</div>
<div class="t " style="left:301.7px;top:272px;font-size:9.2px;line-height:10px;transform:scaleX(0.8000);transform-origin:0 0;letter-spacing:0.43px;">200</div>
<div class="t " style="left:459px;top:272px;font-size:9.2px;line-height:10px;transform:scaleX(0.8000);transform-origin:0 0;letter-spacing:0.43px;">руб.</div>
<div class="t " style="left:590.8px;top:272px;font-size:9.2px;line-height:10px;transform:scaleX(0.8000);transform-origin:0 0;letter-spacing:0.43px;">На поступление</div>
<div class="t " style="left:668.5px;top:272px;font-size:9.2px;line-height:10px;transform:scaleX(0.8000);transform-origin:0 0;letter-spacing:0.43px;">Конфетпром ООО</div>
<div class="t " style="left:792px;top:272px;font-size:9.2px;line-height:10px;transform:scaleX(0.8000);transform-origin:0 0;letter-spacing:0.43px;">Основной дого...</div>
<div class="t " style="left:868.5px;top:272px;font-size:9.2px;line-height:10px;transform:scaleX(0.8000);transform-origin:0 0;letter-spacing:0.43px;">Поступление (акт, нак...</div>
<div style="position:absolute;left:123px;top:286px;width:901px;height:17px;background:#f9f9f9"></div>
<div style="position:absolute;left:123px;top:303px;width:901px;height:1px;background:#e6e6e6"></div>
<svg style="left:151px;top:290.5px" width="10" height="9" viewBox="0 0 10 9"><rect x="0.65" y="0.65" width="7.4" height="6.6" fill="#fff" stroke="#a9b1bd" stroke-width="1.3"/><rect x="2" y="2" width="4.6" height="3.6" fill="#c2c8d0"/><path d="M5.2 6.5 L6.6 7.9 L9.2 4.9" stroke="#25b03a" stroke-width="1.5" fill="none"/></svg>
<div class="t " style="left:165px;top:290px;font-size:9.2px;line-height:10px;transform:scaleX(0.8000);transform-origin:0 0;letter-spacing:0.43px;">11.02.2016</div>
<div class="t " style="left:234.5px;top:290px;font-size:9.2px;line-height:10px;transform:scaleX(0.8000);transform-origin:0 0;letter-spacing:0.43px;">11.02.2016</div>
<div class="t " style="left:301.7px;top:290px;font-size:9.2px;line-height:10px;transform:scaleX(0.8000);transform-origin:0 0;letter-spacing:0.43px;">1875</div>
<div class="t " style="left:459px;top:290px;font-size:9.2px;line-height:10px;transform:scaleX(0.8000);transform-origin:0 0;letter-spacing:0.43px;">руб.</div>
<div class="t " style="left:590.8px;top:290px;font-size:9.2px;line-height:10px;transform:scaleX(0.8000);transform-origin:0 0;letter-spacing:0.43px;">На поступление</div>
<div class="t " style="left:668.5px;top:290px;font-size:9.2px;line-height:10px;transform:scaleX(0.8000);transform-origin:0 0;letter-spacing:0.43px;">Конфетпром ООО</div>
<div class="t " style="right:168.0px;top:290px;font-size:9.2px;line-height:10px;transform:scaleX(0.8000);transform-origin:100% 0;letter-spacing:0.43px;">Договор № 145 от 11...</div>
<div class="t " style="left:868.5px;top:290px;font-size:9.2px;line-height:10px;transform:scaleX(0.8000);transform-origin:0 0;letter-spacing:0.43px;">Поступление (акт, нак...</div>
<div style="position:absolute;left:123px;top:304px;width:901px;height:17px;background:#ffffff"></div>
<div style="position:absolute;left:123px;top:321px;width:901px;height:1px;background:#e6e6e6"></div>
<svg style="left:151px;top:308.5px" width="10" height="9" viewBox="0 0 10 9"><rect x="0.65" y="0.65" width="7.4" height="6.6" fill="#fff" stroke="#a9b1bd" stroke-width="1.3"/><rect x="2" y="2" width="4.6" height="3.6" fill="#c2c8d0"/><path d="M5.2 6.5 L6.6 7.9 L9.2 4.9" stroke="#25b03a" stroke-width="1.5" fill="none"/></svg>
<div class="t " style="left:165px;top:308px;font-size:9.2px;line-height:10px;transform:scaleX(0.8000);transform-origin:0 0;letter-spacing:0.43px;">15.02.2016</div>
<div class="t " style="left:234.5px;top:308px;font-size:9.2px;line-height:10px;transform:scaleX(0.8000);transform-origin:0 0;letter-spacing:0.43px;">15.02.2016</div>
<div class="t " style="left:301.7px;top:308px;font-size:9.2px;line-height:10px;transform:scaleX(0.8000);transform-origin:0 0;letter-spacing:0.43px;">235</div>
<div class="t " style="left:459px;top:308px;font-size:9.2px;line-height:10px;transform:scaleX(0.8000);transform-origin:0 0;letter-spacing:0.43px;">руб.</div>
<div class="t " style="left:590.8px;top:308px;font-size:9.2px;line-height:10px;transform:scaleX(0.8000);transform-origin:0 0;letter-spacing:0.43px;">На поступление</div>
<div class="t " style="left:668.5px;top:308px;font-size:9.2px;line-height:10px;transform:scaleX(0.8000);transform-origin:0 0;letter-spacing:0.43px;">Конфетпром ООО</div>
<div class="t " style="left:792px;top:308px;font-size:9.2px;line-height:10px;transform:scaleX(0.8000);transform-origin:0 0;letter-spacing:0.43px;">Основной дого...</div>
<div class="t " style="left:868.5px;top:308px;font-size:9.2px;line-height:10px;transform:scaleX(0.8000);transform-origin:0 0;letter-spacing:0.43px;">Поступление (акт, нак...</div>
<div style="position:absolute;left:123px;top:322px;width:901px;height:17px;background:#f9f9f9"></div>
<div style="position:absolute;left:123px;top:339px;width:901px;height:1px;background:#e6e6e6"></div>
<svg style="left:151px;top:326.5px" width="10" height="9" viewBox="0 0 10 9"><rect x="0.65" y="0.65" width="7.4" height="6.6" fill="#fff" stroke="#a9b1bd" stroke-width="1.3"/><rect x="2" y="2" width="4.6" height="3.6" fill="#c2c8d0"/><path d="M5.2 6.5 L6.6 7.9 L9.2 4.9" stroke="#25b03a" stroke-width="1.5" fill="none"/></svg>
<div class="t " style="left:165px;top:326px;font-size:9.2px;line-height:10px;transform:scaleX(0.8000);transform-origin:0 0;letter-spacing:0.43px;">16.02.2016</div>
<div class="t " style="left:234.5px;top:326px;font-size:9.2px;line-height:10px;transform:scaleX(0.8000);transform-origin:0 0;letter-spacing:0.43px;">16.02.2016</div>
<div class="t " style="left:301.7px;top:326px;font-size:9.2px;line-height:10px;transform:scaleX(0.8000);transform-origin:0 0;letter-spacing:0.43px;">3895</div>
<div class="t " style="left:459px;top:326px;font-size:9.2px;line-height:10px;transform:scaleX(0.8000);transform-origin:0 0;letter-spacing:0.43px;">руб.</div>
<div class="t " style="left:590.8px;top:326px;font-size:9.2px;line-height:10px;transform:scaleX(0.8000);transform-origin:0 0;letter-spacing:0.43px;">На поступление</div>
<div class="t " style="left:668.5px;top:326px;font-size:9.2px;line-height:10px;transform:scaleX(0.8000);transform-origin:0 0;letter-spacing:0.43px;">Конфетпром ООО</div>
<div class="t " style="left:792px;top:326px;font-size:9.2px;line-height:10px;transform:scaleX(0.8000);transform-origin:0 0;letter-spacing:0.43px;">Основной дого...</div>
<div class="t " style="left:868.5px;top:326px;font-size:9.2px;line-height:10px;transform:scaleX(0.8000);transform-origin:0 0;letter-spacing:0.43px;">Поступление (акт, нак...</div>
<div style="position:absolute;left:123px;top:340px;width:901px;height:16px;background:#ffffff"></div>
<div style="position:absolute;left:123px;top:356px;width:901px;height:1px;background:#e6e6e6"></div>
<svg style="left:151px;top:343.5px" width="10" height="9" viewBox="0 0 10 9"><rect x="0.65" y="0.65" width="7.4" height="6.6" fill="#fff" stroke="#a9b1bd" stroke-width="1.3"/><rect x="2" y="2" width="4.6" height="3.6" fill="#c2c8d0"/><path d="M5.2 6.5 L6.6 7.9 L9.2 4.9" stroke="#25b03a" stroke-width="1.5" fill="none"/></svg>
<div class="t " style="left:165px;top:343px;font-size:9.2px;line-height:10px;transform:scaleX(0.8000);transform-origin:0 0;letter-spacing:0.43px;">22.02.2016</div>
<div class="t " style="left:234.5px;top:343px;font-size:9.2px;line-height:10px;transform:scaleX(0.8000);transform-origin:0 0;letter-spacing:0.43px;">22.02.2016</div>
<div class="t " style="left:301.7px;top:343px;font-size:9.2px;line-height:10px;transform:scaleX(0.8000);transform-origin:0 0;letter-spacing:0.43px;">4215</div>
<div class="t " style="left:459px;top:343px;font-size:9.2px;line-height:10px;transform:scaleX(0.8000);transform-origin:0 0;letter-spacing:0.43px;">руб.</div>
<div class="t " style="left:590.8px;top:343px;font-size:9.2px;line-height:10px;transform:scaleX(0.8000);transform-origin:0 0;letter-spacing:0.43px;">На поступление</div>
<div class="t " style="left:668.5px;top:343px;font-size:9.2px;line-height:10px;transform:scaleX(0.8000);transform-origin:0 0;letter-spacing:0.43px;">Конфетпром ООО</div>
<div class="t " style="left:792px;top:343px;font-size:9.2px;line-height:10px;transform:scaleX(0.8000);transform-origin:0 0;letter-spacing:0.43px;">Основной дого...</div>
<div class="t " style="left:868.5px;top:343px;font-size:9.2px;line-height:10px;transform:scaleX(0.8000);transform-origin:0 0;letter-spacing:0.43px;">Поступление (акт, нак...</div>
<div style="position:absolute;left:123px;top:357px;width:901px;height:17px;background:#fbd5d5"></div>
<div style="position:absolute;left:123px;top:374px;width:901px;height:1px;background:#eed5d5"></div>
<svg style="left:151px;top:361.5px" width="10" height="9" viewBox="0 0 10 9"><rect x="0.65" y="0.65" width="7.4" height="6.6" fill="#fff" stroke="#a9b1bd" stroke-width="1.3"/><rect x="2" y="2" width="4.6" height="3.6" fill="#c2c8d0"/><path d="M5.2 6.5 L6.6 7.9 L9.2 4.9" stroke="#25b03a" stroke-width="1.5" fill="none"/></svg>
<div class="t " style="left:165px;top:361px;font-size:9.2px;line-height:10px;transform:scaleX(0.8000);transform-origin:0 0;letter-spacing:0.43px;">24.02.2016</div>
<div class="t " style="left:234.5px;top:361px;font-size:9.2px;line-height:10px;transform:scaleX(0.8000);transform-origin:0 0;letter-spacing:0.43px;">24.02.2016</div>
<div class="t " style="left:301.7px;top:361px;font-size:9.2px;line-height:10px;transform:scaleX(0.8000);transform-origin:0 0;letter-spacing:0.43px;">301</div>
<div class="t " style="left:459px;top:361px;font-size:9.2px;line-height:10px;transform:scaleX(0.8000);transform-origin:0 0;letter-spacing:0.43px;">руб.</div>
<div class="t " style="left:590.8px;top:361px;font-size:9.2px;line-height:10px;transform:scaleX(0.8000);transform-origin:0 0;letter-spacing:0.43px;">На поступление</div>
<div class="t " style="left:668.5px;top:361px;font-size:9.2px;line-height:10px;transform:scaleX(0.8000);transform-origin:0 0;letter-spacing:0.43px;">Конфетпром ООО</div>
<div class="t " style="left:792px;top:361px;font-size:9.2px;line-height:10px;transform:scaleX(0.8000);transform-origin:0 0;letter-spacing:0.43px;">Основной дого...</div>
<div class="t " style="left:868.5px;top:361px;font-size:9.2px;line-height:10px;transform:scaleX(0.8000);transform-origin:0 0;letter-spacing:0.43px;">Поступление (акт, нак...</div>
<div style="position:absolute;left:123px;top:375px;width:901px;height:17px;background:#fbd5d5"></div>
<div style="position:absolute;left:123px;top:392px;width:901px;height:1px;background:#eed5d5"></div>
<svg style="left:151px;top:379.5px" width="10" height="9" viewBox="0 0 10 9"><rect x="0.65" y="0.65" width="7.4" height="6.6" fill="#fff" stroke="#a9b1bd" stroke-width="1.3"/><rect x="2" y="2" width="4.6" height="3.6" fill="#c2c8d0"/><path d="M5.2 6.5 L6.6 7.9 L9.2 4.9" stroke="#25b03a" stroke-width="1.5" fill="none"/></svg>
<div class="t " style="left:165px;top:379px;font-size:9.2px;line-height:10px;transform:scaleX(0.8000);transform-origin:0 0;letter-spacing:0.43px;">24.02.2016</div>
<div class="t " style="left:234.5px;top:379px;font-size:9.2px;line-height:10px;transform:scaleX(0.8000);transform-origin:0 0;letter-spacing:0.43px;">24.02.2016</div>
<div class="t " style="left:301.7px;top:379px;font-size:9.2px;line-height:10px;transform:scaleX(0.8000);transform-origin:0 0;letter-spacing:0.43px;">2</div>
<div class="t " style="left:459px;top:379px;font-size:9.2px;line-height:10px;transform:scaleX(0.8000);transform-origin:0 0;letter-spacing:0.43px;">руб.</div>
<div class="t " style="left:590.8px;top:379px;font-size:9.2px;line-height:10px;transform:scaleX(0.8000);transform-origin:0 0;letter-spacing:0.43px;">На поступление</div>
<div class="t " style="left:668.5px;top:379px;font-size:9.2px;line-height:10px;transform:scaleX(0.8000);transform-origin:0 0;letter-spacing:0.43px;">Конфетпром ООО</div>
<div class="t " style="right:171.5px;top:379px;font-size:9.2px;line-height:10px;transform:scaleX(0.8000);transform-origin:100% 0;letter-spacing:0.43px;">Договор от 24.02.2016</div>
<div class="t " style="left:868.5px;top:379px;font-size:9.2px;line-height:10px;transform:scaleX(0.8000);transform-origin:0 0;letter-spacing:0.43px;">Отчет комиссионера (...</div>
<div style="position:absolute;left:123px;top:393px;width:901px;height:17px;background:#f9f9f9"></div>
<div style="position:absolute;left:123px;top:410px;width:901px;height:1px;background:#e6e6e6"></div>
<svg style="left:151px;top:397.5px" width="10" height="9" viewBox="0 0 10 9"><rect x="0.65" y="0.65" width="7.4" height="6.6" fill="#fff" stroke="#a9b1bd" stroke-width="1.3"/><rect x="2" y="2" width="4.6" height="3.6" fill="#c2c8d0"/><path d="M5.2 6.5 L6.6 7.9 L9.2 4.9" stroke="#25b03a" stroke-width="1.5" fill="none"/></svg>
<div class="t " style="left:165px;top:397px;font-size:9.2px;line-height:10px;transform:scaleX(0.8000);transform-origin:0 0;letter-spacing:0.43px;">29.02.2016</div>
<div class="t " style="left:234.5px;top:397px;font-size:9.2px;line-height:10px;transform:scaleX(0.8000);transform-origin:0 0;letter-spacing:0.43px;">29.02.2016</div>
<div class="t " style="left:301.7px;top:397px;font-size:9.2px;line-height:10px;transform:scaleX(0.8000);transform-origin:0 0;letter-spacing:0.43px;">898</div>
<div class="t " style="left:459px;top:397px;font-size:9.2px;line-height:10px;transform:scaleX(0.8000);transform-origin:0 0;letter-spacing:0.43px;">руб.</div>
<div class="t " style="left:590.8px;top:397px;font-size:9.2px;line-height:10px;transform:scaleX(0.8000);transform-origin:0 0;letter-spacing:0.43px;">На поступление</div>
<div class="t " style="left:668.5px;top:397px;font-size:9.2px;line-height:10px;transform:scaleX(0.8000);transform-origin:0 0;letter-spacing:0.43px;">Конфетпром ООО</div>
<div class="t " style="right:170.5px;top:397px;font-size:9.2px;line-height:10px;transform:scaleX(0.8000);transform-origin:100% 0;letter-spacing:0.43px;">обслу...</div>
<div class="t " style="left:868.5px;top:397px;font-size:9.2px;line-height:10px;transform:scaleX(0.8000);transform-origin:0 0;letter-spacing:0.43px;">Поступление (акт, нак...</div>
<div style="position:absolute;left:123px;top:411px;width:901px;height:17px;background:#ffffff"></div>
<div style="position:absolute;left:123px;top:428px;width:901px;height:1px;background:#e6e6e6"></div>
<svg style="left:151px;top:415.5px" width="10" height="9" viewBox="0 0 10 9"><rect x="0.65" y="0.65" width="7.4" height="6.6" fill="#fff" stroke="#a9b1bd" stroke-width="1.3"/><rect x="2" y="2" width="4.6" height="3.6" fill="#c2c8d0"/><path d="M5.2 6.5 L6.6 7.9 L9.2 4.9" stroke="#25b03a" stroke-width="1.5" fill="none"/></svg>
<div class="t " style="left:165px;top:415px;font-size:9.2px;line-height:10px;transform:scaleX(0.8000);transform-origin:0 0;letter-spacing:0.43px;">11.03.2016</div>
<div class="t " style="left:234.5px;top:415px;font-size:9.2px;line-height:10px;transform:scaleX(0.8000);transform-origin:0 0;letter-spacing:0.43px;">11.03.2016</div>
<div class="t " style="left:301.7px;top:415px;font-size:9.2px;line-height:10px;transform:scaleX(0.8000);transform-origin:0 0;letter-spacing:0.43px;">27</div>
<div class="t " style="left:459px;top:415px;font-size:9.2px;line-height:10px;transform:scaleX(0.8000);transform-origin:0 0;letter-spacing:0.43px;">руб.</div>
<div class="t " style="left:590.8px;top:415px;font-size:9.2px;line-height:10px;transform:scaleX(0.8000);transform-origin:0 0;letter-spacing:0.43px;">На поступление</div>
<div class="t " style="left:668.5px;top:415px;font-size:9.2px;line-height:10px;transform:scaleX(0.8000);transform-origin:0 0;letter-spacing:0.43px;">Конфетпром ООО</div>
<div class="t " style="right:172.5px;top:415px;font-size:9.2px;line-height:10px;transform:scaleX(0.8000);transform-origin:100% 0;letter-spacing:0.43px;">Договор от 11.01.2016</div>
<div class="t " style="left:868.5px;top:415px;font-size:9.2px;line-height:10px;transform:scaleX(0.8000);transform-origin:0 0;letter-spacing:0.43px;">Возврат товаров от по...</div>
<div style="position:absolute;left:123px;top:429px;width:901px;height:17px;background:#f9f9f9"></div>
<div style="position:absolute;left:123px;top:446px;width:901px;height:1px;background:#e6e6e6"></div>
<svg style="left:151px;top:433.5px" width="10" height="9" viewBox="0 0 10 9"><rect x="0.65" y="0.65" width="7.4" height="6.6" fill="#fff" stroke="#a9b1bd" stroke-width="1.3"/><rect x="2" y="2" width="4.6" height="3.6" fill="#c2c8d0"/><path d="M5.2 6.5 L6.6 7.9 L9.2 4.9" stroke="#25b03a" stroke-width="1.5" fill="none"/></svg>
<div class="t " style="left:165px;top:433px;font-size:9.2px;line-height:10px;transform:scaleX(0.8000);transform-origin:0 0;letter-spacing:0.43px;">14.03.2016</div>
<div class="t " style="left:234.5px;top:433px;font-size:9.2px;line-height:10px;transform:scaleX(0.8000);transform-origin:0 0;letter-spacing:0.43px;">01.03.2016</div>
<div class="t " style="left:301.7px;top:433px;font-size:9.2px;line-height:10px;transform:scaleX(0.8000);transform-origin:0 0;letter-spacing:0.43px;">78780454878</div>
<div class="t " style="left:459px;top:433px;font-size:9.2px;line-height:10px;transform:scaleX(0.8000);transform-origin:0 0;letter-spacing:0.43px;">руб.</div>
<div class="t " style="left:590.8px;top:433px;font-size:9.2px;line-height:10px;transform:scaleX(0.8000);transform-origin:0 0;letter-spacing:0.43px;">На поступление</div>
<div class="t " style="left:668.5px;top:433px;font-size:9.2px;line-height:10px;transform:scaleX(0.8000);transform-origin:0 0;letter-spacing:0.43px;">Конфетпром ООО</div>
<div class="t " style="left:868.5px;top:433px;font-size:9.2px;line-height:10px;transform:scaleX(0.8000);transform-origin:0 0;letter-spacing:0.43px;">Авансовый отчет КП0...</div>
<div class="t " style="left:969.5px;top:433px;font-size:9.2px;line-height:10px;transform:scaleX(0.8000);transform-origin:0 0;letter-spacing:0.43px;">Создан автома</div>
<div style="position:absolute;left:123px;top:447px;width:901px;height:17px;background:#ffffff"></div>
<div style="position:absolute;left:123px;top:464px;width:901px;height:1px;background:#e6e6e6"></div>
<svg style="left:151px;top:451.5px" width="10" height="9" viewBox="0 0 10 9"><rect x="0.65" y="0.65" width="7.4" height="6.6" fill="#fff" stroke="#a9b1bd" stroke-width="1.3"/><rect x="2" y="2" width="4.6" height="3.6" fill="#c2c8d0"/><path d="M5.2 6.5 L6.6 7.9 L9.2 4.9" stroke="#25b03a" stroke-width="1.5" fill="none"/></svg>
<div class="t " style="left:165px;top:451px;font-size:9.2px;line-height:10px;transform:scaleX(0.8000);transform-origin:0 0;letter-spacing:0.43px;">14.03.2016</div>
<div class="t " style="left:234.5px;top:451px;font-size:9.2px;line-height:10px;transform:scaleX(0.8000);transform-origin:0 0;letter-spacing:0.43px;">02.03.2016</div>
<div class="t " style="left:301.7px;top:451px;font-size:9.2px;line-height:10px;transform:scaleX(0.8000);transform-origin:0 0;letter-spacing:0.43px;">789</div>
<div class="t " style="right:575.5px;top:451px;font-size:9.2px;line-height:10px;transform:scaleX(0.8000);transform-origin:100% 0;letter-spacing:0.43px;">5 000,00</div>
<div class="t " style="left:459px;top:451px;font-size:9.2px;line-height:10px;transform:scaleX(0.8000);transform-origin:0 0;letter-spacing:0.43px;">руб.</div>
<div class="t " style="left:513.3px;top:451px;font-size:9.2px;line-height:10px;transform:scaleX(0.8000);transform-origin:0 0;letter-spacing:0.43px;">ООО &quot;Невский ...</div>
<div class="t " style="left:590.8px;top:451px;font-size:9.2px;line-height:10px;transform:scaleX(0.8000);transform-origin:0 0;letter-spacing:0.43px;">На поступление</div>
<div class="t " style="left:668.5px;top:451px;font-size:9.2px;line-height:10px;transform:scaleX(0.8000);transform-origin:0 0;letter-spacing:0.43px;">Конфетпром ООО</div>
<div class="t " style="left:868.5px;top:451px;font-size:9.2px;line-height:10px;transform:scaleX(0.8000);transform-origin:0 0;letter-spacing:0.43px;">Авансовый отчет КП0...</div>
<div class="t " style="left:969.5px;top:451px;font-size:9.2px;line-height:10px;transform:scaleX(0.8000);transform-origin:0 0;letter-spacing:0.43px;">Создан автома</div>
<div style="position:absolute;left:123px;top:465px;width:901px;height:17px;background:#f9f9f9"></div>
<div style="position:absolute;left:123px;top:482px;width:901px;height:1px;background:#e6e6e6"></div>
<svg style="left:151px;top:469.5px" width="10" height="9" viewBox="0 0 10 9"><rect x="0.65" y="0.65" width="7.4" height="6.6" fill="#fff" stroke="#a9b1bd" stroke-width="1.3"/><rect x="2" y="2" width="4.6" height="3.6" fill="#c2c8d0"/><path d="M5.2 6.5 L6.6 7.9 L9.2 4.9" stroke="#25b03a" stroke-width="1.5" fill="none"/></svg>
<div class="t " style="left:165px;top:469px;font-size:9.2px;line-height:10px;transform:scaleX(0.8000);transform-origin:0 0;letter-spacing:0.43px;">21.03.2016</div>
<div class="t " style="left:234.5px;top:469px;font-size:9.2px;line-height:10px;transform:scaleX(0.8000);transform-origin:0 0;letter-spacing:0.43px;">21.03.2016</div>
<div class="t " style="left:301.7px;top:469px;font-size:9.2px;line-height:10px;transform:scaleX(0.8000);transform-origin:0 0;letter-spacing:0.43px;">56598</div>
<div class="t " style="left:459px;top:469px;font-size:9.2px;line-height:10px;transform:scaleX(0.8000);transform-origin:0 0;letter-spacing:0.43px;">руб.</div>
<div class="t " style="left:590.8px;top:469px;font-size:9.2px;line-height:10px;transform:scaleX(0.8000);transform-origin:0 0;letter-spacing:0.43px;">На поступление</div>
<div class="t " style="left:668.5px;top:469px;font-size:9.2px;line-height:10px;transform:scaleX(0.8000);transform-origin:0 0;letter-spacing:0.43px;">Конфетпром ООО</div>
<div class="t " style="left:868.5px;top:469px;font-size:9.2px;line-height:10px;transform:scaleX(0.8000);transform-origin:0 0;letter-spacing:0.43px;">Поступление из перер...</div>
<div style="position:absolute;left:123px;top:483px;width:901px;height:17px;background:#fbd5d5"></div>
<div style="position:absolute;left:123px;top:500px;width:901px;height:1px;background:#eed5d5"></div>
<svg style="left:151px;top:487.5px" width="10" height="9" viewBox="0 0 10 9"><rect x="0.65" y="0.65" width="7.4" height="6.6" fill="#fff" stroke="#a9b1bd" stroke-width="1.3"/><rect x="2" y="2" width="4.6" height="3.6" fill="#c2c8d0"/><path d="M5.2 6.5 L6.6 7.9 L9.2 4.9" stroke="#25b03a" stroke-width="1.5" fill="none"/></svg>
<div class="t " style="left:165px;top:487px;font-size:9.2px;line-height:10px;transform:scaleX(0.8000);transform-origin:0 0;letter-spacing:0.43px;">25.10.2024</div>
<div class="t " style="left:234.5px;top:487px;font-size:9.2px;line-height:10px;transform:scaleX(0.8000);transform-origin:0 0;letter-spacing:0.43px;">25.10.2024</div>
<div class="t " style="left:301.7px;top:487px;font-size:9.2px;line-height:10px;transform:scaleX(0.8000);transform-origin:0 0;letter-spacing:0.43px;">2</div>
<div class="t " style="right:575.5px;top:487px;font-size:9.2px;line-height:10px;transform:scaleX(0.8000);transform-origin:100% 0;letter-spacing:0.43px;">5 400,00</div>
<div class="t " style="left:459px;top:487px;font-size:9.2px;line-height:10px;transform:scaleX(0.8000);transform-origin:0 0;letter-spacing:0.43px;">руб.</div>
<div class="t " style="left:513.3px;top:487px;font-size:9.2px;line-height:10px;transform:scaleX(0.8000);transform-origin:0 0;letter-spacing:0.43px;">База &quot;Продукты&quot;</div>
<div class="t " style="left:590.8px;top:487px;font-size:9.2px;line-height:10px;transform:scaleX(0.8000);transform-origin:0 0;letter-spacing:0.43px;">На поступление</div>
<div class="t " style="left:668.5px;top:487px;font-size:9.2px;line-height:10px;transform:scaleX(0.8000);transform-origin:0 0;letter-spacing:0.43px;">Конфетпром ООО</div>
<div class="t " style="left:792px;top:487px;font-size:9.2px;line-height:10px;transform:scaleX(0.8000);transform-origin:0 0;letter-spacing:0.43px;">Основной дого...</div>
<div class="t " style="left:868.5px;top:487px;font-size:9.2px;line-height:10px;transform:scaleX(0.8000);transform-origin:0 0;letter-spacing:0.43px;">Поступление (акт, нак...</div>
<div style="position:absolute;left:123px;top:501px;width:901px;height:17px;background:#fbd5d5"></div>
<div style="position:absolute;left:123px;top:518px;width:901px;height:1px;background:#eed5d5"></div>
<svg style="left:151px;top:505.5px" width="10" height="9" viewBox="0 0 10 9"><rect x="0.65" y="0.65" width="7.4" height="6.6" fill="#fff" stroke="#a9b1bd" stroke-width="1.3"/><rect x="2" y="2" width="4.6" height="3.6" fill="#c2c8d0"/><path d="M5.2 6.5 L6.6 7.9 L9.2 4.9" stroke="#25b03a" stroke-width="1.5" fill="none"/></svg>
<div class="t " style="left:165px;top:505px;font-size:9.2px;line-height:10px;transform:scaleX(0.8000);transform-origin:0 0;letter-spacing:0.43px;">15.12.2024</div>
<div class="t " style="left:234.5px;top:505px;font-size:9.2px;line-height:10px;transform:scaleX(0.8000);transform-origin:0 0;letter-spacing:0.43px;">15.12.2024</div>
<div class="t " style="left:301.7px;top:505px;font-size:9.2px;line-height:10px;transform:scaleX(0.8000);transform-origin:0 0;letter-spacing:0.43px;">15</div>
<div class="t " style="right:575.5px;top:505px;font-size:9.2px;line-height:10px;transform:scaleX(0.8000);transform-origin:100% 0;letter-spacing:0.43px;">8 100,00</div>
<div class="t " style="left:459px;top:505px;font-size:9.2px;line-height:10px;transform:scaleX(0.8000);transform-origin:0 0;letter-spacing:0.43px;">руб.</div>
<div class="t " style="left:513.3px;top:505px;font-size:9.2px;line-height:10px;transform:scaleX(0.8000);transform-origin:0 0;letter-spacing:0.43px;">База &quot;Продукты&quot;</div>
<div class="t " style="left:590.8px;top:505px;font-size:9.2px;line-height:10px;transform:scaleX(0.8000);transform-origin:0 0;letter-spacing:0.43px;">На поступление</div>
<div class="t " style="left:668.5px;top:505px;font-size:9.2px;line-height:10px;transform:scaleX(0.8000);transform-origin:0 0;letter-spacing:0.43px;">Конфетпром ООО</div>
<div class="t " style="left:792px;top:505px;font-size:9.2px;line-height:10px;transform:scaleX(0.8000);transform-origin:0 0;letter-spacing:0.43px;">Основной дого...</div>
<div class="t " style="left:868.5px;top:505px;font-size:9.2px;line-height:10px;transform:scaleX(0.8000);transform-origin:0 0;letter-spacing:0.43px;">Поступление (акт, нак...</div>
<div style="position:absolute;left:366px;top:145px;width:457px;height:305px;background:#fff;border:1px solid #a9a9a9;box-shadow:0 1px 3px rgba(0,0,0,.25)"></div>
<div class="t " style="left:375px;top:153px;font-size:11.6px;line-height:12px;color:#1e1e1e;-webkit-text-stroke:0.2px #1e1e1e;">Настройка формы</div>
<svg style="left:806px;top:155px" width="8" height="8" viewBox="0 0 8 8"><path d="M0.6 0.4 L6.8 6.6 M6.8 0.4 L0.6 6.6" stroke="#555" stroke-width="0.9"/></svg>
<div class="t " style="left:388.4px;top:179px;font-size:9.2px;line-height:10px;transform:scaleX(0.8000);transform-origin:0 0;letter-spacing:0.43px;">Добавить группу</div>
<div class="t " style="left:478.2px;top:179px;font-size:9.2px;line-height:10px;transform:scaleX(0.8000);transform-origin:0 0;letter-spacing:0.43px;">Добавить поля</div>
<div style="position:absolute;left:457px;top:176px;width:84px;height:28px;border:2px solid #0808f2"></div>
<svg style="left:375px;top:178.5px" width="11" height="10" viewBox="0 0 11 10"><path d="M1 1.4 Q1 0.6 1.8 0.6 H4.2 L5 1.6 H9.4 Q10 1.6 10 2.2 V7.4 Q10 8 9.4 8 H1.6 Q1 8 1 7.4Z" fill="#f5cd63" stroke="#e0ad3c" stroke-width="0.6"/><path d="M1.4 2.8 H9.6" stroke="#ffe7a3" stroke-width="0.8"/><circle cx="3.3" cy="6.9" r="2.8" fill="#2aa437"/><path d="M3.3 5.4V8.4M1.8 6.9H4.8" stroke="#fff" stroke-width="1.1"/></svg>
<svg style="left:466.3px;top:178.8px" width="8.8" height="8.8" viewBox="0 0 9 9"><defs><radialGradient id="gp" cx="40%" cy="35%" r="65%"><stop offset="0" stop-color="#5cc95a"/><stop offset="1" stop-color="#2a9a2f"/></radialGradient></defs><circle cx="4.5" cy="4.5" r="4.4" fill="url(#gp)"/><path d="M4.5 2V7M2 4.5H7" stroke="#fff" stroke-width="1.5"/></svg>
<svg style="left:548.5px;top:179.5px" width="8" height="8" viewBox="0 0 8 8"><path d="M0.9 0.9 L7.1 7.1 M7.1 0.9 L0.9 7.1" stroke="#e0393e" stroke-width="1.7"/></svg>
<svg style="left:565px;top:180px" width="8" height="7" viewBox="0 0 8 7"><path d="M4 0 L7.6 3.6 H5.4 V7 H2.6 V3.6 H0.4Z" fill="#3d9ee0"/></svg>
<svg style="left:581px;top:180px" width="8" height="7" viewBox="0 0 8 7"><path d="M4 7 L7.6 3.4 H5.4 V0 H2.6 V3.4 H0.4Z" fill="#3d9ee0"/></svg>
<svg style="left:596.5px;top:178px" width="10" height="10" viewBox="0 0 10 10"><path d="M0.5 2.6 L2.6 0.5 H9.5 V7.4 L7.4 9.5 H0.5Z" fill="#cfd8e0" stroke="#8b9aa8" stroke-width="0.7"/><rect x="0.5" y="2.6" width="6.9" height="6.9" fill="#fff" stroke="#8b9aa8" stroke-width="0.8"/><path d="M1.8 5.6 L3.6 7.6 L9.2 1.6" stroke="#2fae3c" stroke-width="1.5" fill="none"/></svg>
<svg style="left:612.5px;top:178px" width="10" height="10" viewBox="0 0 10 10"><path d="M0.5 2.6 L2.6 0.5 H9.5 V7.4 L7.4 9.5 H0.5Z" fill="#c9d3dc" stroke="#8b9aa8" stroke-width="0.7"/><rect x="0.5" y="2.6" width="6.9" height="6.9" fill="#fff" stroke="#8b9aa8" stroke-width="0.8"/></svg>
<svg style="left:629px;top:179.3px" width="9" height="9" viewBox="0 0 9 9"><circle cx="4.3" cy="4" r="3.6" fill="#fff" stroke="#444" stroke-width="0.9"/><text x="2.4" y="6.6" font-family="Liberation Sans" font-size="6.4" font-weight="bold" fill="#444">?</text></svg>
<svg style="left:806px;top:182px" width="4" height="3" viewBox="0 0 4 3"><path d="M0.2 0.4H3.8L2 2.3Z" fill="#444"/></svg>
<div class="t " style="left:775px;top:178px;font-size:9.2px;line-height:10px;transform:scaleX(0.8000);transform-origin:0 0;letter-spacing:0.43px;">Еще</div>
<div class="t " style="left:372px;top:196px;font-size:9.2px;line-height:10px;transform:scaleX(0.8000);transform-origin:0 0;letter-spacing:0.43px;">Элементы формы</div>
<div class="t " style="left:584px;top:196px;font-size:9.2px;line-height:10px;transform:scaleX(0.8000);transform-origin:0 0;letter-spacing:0.43px;">Свойства элемента формы</div>
<div style="position:absolute;left:372px;top:211px;width:207px;height:216px;border:1px solid #c3c3c3;background:#fff"></div>
<div class="cb" style="left:402px;top:217px"></div>
<svg style="left:403px;top:215px" width="9" height="10" viewBox="0 0 9 10"><path d="M1.2 5.2 L3.6 8 L8.4 1.4" stroke="#1a9a3a" stroke-width="1.5" fill="none"/></svg>
<div style="position:absolute;left:418px;top:220px;width:7px;height:2.2px;background:#e4605a;border-radius:1.1px"></div>
<div class="t " style="left:433px;top:216px;font-size:9.2px;line-height:10px;transform:scaleX(0.8000);transform-origin:0 0;letter-spacing:0.43px;color:#333;">Валюта</div>
<div class="cb" style="left:402px;top:235px"></div>
<svg style="left:403px;top:233px" width="9" height="10" viewBox="0 0 9 10"><path d="M1.2 5.2 L3.6 8 L8.4 1.4" stroke="#1a9a3a" stroke-width="1.5" fill="none"/></svg>
<div style="position:absolute;left:418px;top:238px;width:7px;height:2.2px;background:#e4605a;border-radius:1.1px"></div>
<div class="t " style="left:433px;top:234px;font-size:9.2px;line-height:10px;transform:scaleX(0.8000);transform-origin:0 0;letter-spacing:0.43px;color:#333;">Контрагент</div>
<div class="cb" style="left:402px;top:253px"></div>
<svg style="left:403px;top:251px" width="9" height="10" viewBox="0 0 9 10"><path d="M1.2 5.2 L3.6 8 L8.4 1.4" stroke="#1a9a3a" stroke-width="1.5" fill="none"/></svg>
<div style="position:absolute;left:418px;top:256px;width:7px;height:2.2px;background:#e4605a;border-radius:1.1px"></div>
<div class="t " style="left:433px;top:252px;font-size:9.2px;line-height:10px;transform:scaleX(0.8000);transform-origin:0 0;letter-spacing:0.43px;color:#333;">Вид счета-фактуры</div>
<div class="cb" style="left:402px;top:271px"></div>
<svg style="left:403px;top:269px" width="9" height="10" viewBox="0 0 9 10"><path d="M1.2 5.2 L3.6 8 L8.4 1.4" stroke="#1a9a3a" stroke-width="1.5" fill="none"/></svg>
<div style="position:absolute;left:418px;top:274px;width:7px;height:2.2px;background:#e4605a;border-radius:1.1px"></div>
<div class="t " style="left:433px;top:270px;font-size:9.2px;line-height:10px;transform:scaleX(0.8000);transform-origin:0 0;letter-spacing:0.43px;color:#333;">Организация</div>
<div class="cb" style="left:402px;top:289px"></div>
<svg style="left:403px;top:287px" width="9" height="10" viewBox="0 0 9 10"><path d="M1.2 5.2 L3.6 8 L8.4 1.4" stroke="#1a9a3a" stroke-width="1.5" fill="none"/></svg>
<div style="position:absolute;left:418px;top:292px;width:7px;height:2.2px;background:#e4605a;border-radius:1.1px"></div>
<div class="t " style="left:433px;top:288px;font-size:9.2px;line-height:10px;transform:scaleX(0.8000);transform-origin:0 0;letter-spacing:0.43px;color:#333;">Оригинал</div>
<div class="cb" style="left:402px;top:307px"></div>
<svg style="left:403px;top:305px" width="9" height="10" viewBox="0 0 9 10"><path d="M1.2 5.2 L3.6 8 L8.4 1.4" stroke="#1a9a3a" stroke-width="1.5" fill="none"/></svg>
<div style="position:absolute;left:418px;top:310px;width:7px;height:2.2px;background:#e4605a;border-radius:1.1px"></div>
<div class="t " style="left:433px;top:306px;font-size:9.2px;line-height:10px;transform:scaleX(0.8000);transform-origin:0 0;letter-spacing:0.43px;color:#333;">Договор</div>
<div class="cb" style="left:402px;top:325px"></div>
<svg style="left:403px;top:323px" width="9" height="10" viewBox="0 0 9 10"><path d="M1.2 5.2 L3.6 8 L8.4 1.4" stroke="#1a9a3a" stroke-width="1.5" fill="none"/></svg>
<div style="position:absolute;left:418px;top:328px;width:7px;height:2.2px;background:#e4605a;border-radius:1.1px"></div>
<div class="t " style="left:433px;top:324px;font-size:9.2px;line-height:10px;transform:scaleX(0.8000);transform-origin:0 0;letter-spacing:0.43px;color:#333;">Документ-основание</div>
<div class="cb" style="left:402px;top:343px"></div>
<svg style="left:403px;top:341px" width="9" height="10" viewBox="0 0 9 10"><path d="M1.2 5.2 L3.6 8 L8.4 1.4" stroke="#1a9a3a" stroke-width="1.5" fill="none"/></svg>
<div style="position:absolute;left:418px;top:346px;width:7px;height:2.2px;background:#e4605a;border-radius:1.1px"></div>
<div class="t " style="left:433px;top:342px;font-size:9.2px;line-height:10px;transform:scaleX(0.8000);transform-origin:0 0;letter-spacing:0.43px;color:#333;">Комментарий</div>
<div class="cb" style="left:402px;top:361px"></div>
<svg style="left:403px;top:359px" width="9" height="10" viewBox="0 0 9 10"><path d="M1.2 5.2 L3.6 8 L8.4 1.4" stroke="#1a9a3a" stroke-width="1.5" fill="none"/></svg>
<div style="position:absolute;left:418px;top:364px;width:7px;height:2.2px;background:#e4605a;border-radius:1.1px"></div>
<div class="t " style="left:433px;top:360px;font-size:9.2px;line-height:10px;transform:scaleX(0.8000);transform-origin:0 0;letter-spacing:0.43px;color:#333;">Ответственный</div>
<div class="cb" style="left:402px;top:379px"></div>
<svg style="left:403px;top:377px" width="9" height="10" viewBox="0 0 9 10"><path d="M1.2 5.2 L3.6 8 L8.4 1.4" stroke="#1a9a3a" stroke-width="1.5" fill="none"/></svg>
<div style="position:absolute;left:418px;top:382px;width:7px;height:2.2px;background:#e4605a;border-radius:1.1px"></div>
<div class="t " style="left:433px;top:378px;font-size:9.2px;line-height:10px;transform:scaleX(0.8000);transform-origin:0 0;letter-spacing:0.43px;color:#333;">Состояние ЭДО</div>
<div class="cb" style="left:402px;top:397px"></div>
<div style="position:absolute;left:418px;top:400px;width:7px;height:2.2px;background:#e4605a;border-radius:1.1px"></div>
<div style="position:absolute;left:430px;top:392px;width:34px;height:17px;background:#fde28c;border:1px solid #f0c75a"></div>
<div class="t " style="left:433px;top:396px;font-size:9.2px;line-height:10px;transform:scaleX(0.8000);transform-origin:0 0;letter-spacing:0.43px;color:#333;">Ссылка</div>
<div style="position:absolute;left:391px;top:390px;width:98px;height:33px;border:2px solid #0808f2"></div>
<div style="position:absolute;left:571px;top:226px;width:5px;height:186px;background:#dcdcdc;border-radius:2px"></div>
<div style="position:absolute;left:571px;top:310px;width:5px;height:102px;background:#9c9c9c;border-radius:2px"></div>
<svg style="left:571.5px;top:217.5px" width="4" height="3" viewBox="0 0 4 3"><path d="M0 2.6H4L2 0.2Z" fill="#555"/></svg>
<svg style="left:571.5px;top:417.5px" width="4" height="3" viewBox="0 0 4 3"><path d="M0 0.4H4L2 2.8Z" fill="#b0b0b0"/></svg>
<div style="position:absolute;left:584px;top:212px;width:233px;height:215px;border:1px solid #c6c6c6;border-radius:2px;background:#fff"></div>
<div class="t " style="left:594px;top:218px;font-size:9.2px;line-height:10px;transform:scaleX(0.8000);transform-origin:0 0;letter-spacing:0.43px;color:#444;">Заголовок</div>
<div class="inp" style="left:692px;top:216px;width:122px;height:28px"></div>
<div class="t " style="left:695px;top:218px;font-size:9.2px;line-height:10px;transform:scaleX(0.8000);transform-origin:0 0;letter-spacing:0.43px;color:#333;">Ссылка</div>
<div class="t " style="left:594px;top:245px;font-size:9.2px;line-height:10px;transform:scaleX(0.8000);transform-origin:0 0;letter-spacing:0.43px;color:#444;width:122.50px;overflow:hidden;">Отображать заголовок</div>
<div class="cb" style="left:693px;top:246px"></div>
<svg style="left:694px;top:244px" width="10" height="10" viewBox="0 0 10 10"><path d="M1.2 5.4 L3.6 8.2 L8.6 1.2" stroke="#1a9a3a" stroke-width="1.5" fill="none"/></svg>
<div class="t " style="left:594px;top:258px;font-size:9.2px;line-height:10px;transform:scaleX(0.8000);transform-origin:0 0;letter-spacing:0.43px;color:#444;">Подсказка</div>
<div class="inp" style="left:692px;top:257px;width:122px;height:28px"></div>
<div class="t " style="left:594px;top:286px;font-size:9.2px;line-height:10px;transform:scaleX(0.8000);transform-origin:0 0;letter-spacing:0.43px;color:#444;width:122.50px;overflow:hidden;">Активизировать при открытии</div>
<div class="cb" style="left:693px;top:287px"></div>
<div class="t " style="left:594px;top:299px;font-size:9.2px;line-height:10px;transform:scaleX(0.8000);transform-origin:0 0;letter-spacing:0.43px;color:#444;width:122.50px;overflow:hidden;">Растягивать по горизонтали</div>
<div class="inp" style="left:692px;top:298px;width:122px;height:14px"></div>
<div style="position:absolute;left:800px;top:299px;width:1px;height:12px;background:#d2d2d2"></div>
<svg style="left:805px;top:303px" width="4" height="3" viewBox="0 0 4 3"><path d="M0.2 0.4H3.8L2 2.3Z" fill="#333"/></svg>
<div class="t " style="left:695px;top:300px;font-size:9.2px;line-height:10px;transform:scaleX(0.8000);transform-origin:0 0;letter-spacing:0.43px;color:#333;">Авто</div>
<div class="t " style="left:594px;top:313px;font-size:9.2px;line-height:10px;transform:scaleX(0.8000);transform-origin:0 0;letter-spacing:0.43px;color:#444;width:122.50px;overflow:hidden;">Растягивать по вертикали</div>
<div class="inp" style="left:692px;top:312px;width:122px;height:14px"></div>
<div style="position:absolute;left:800px;top:313px;width:1px;height:12px;background:#d2d2d2"></div>
<svg style="left:805px;top:317px" width="4" height="3" viewBox="0 0 4 3"><path d="M0.2 0.4H3.8L2 2.3Z" fill="#333"/></svg>
<div class="t " style="left:695px;top:314px;font-size:9.2px;line-height:10px;transform:scaleX(0.8000);transform-origin:0 0;letter-spacing:0.43px;color:#333;">Авто</div>
<div class="t " style="left:594px;top:327px;font-size:9.2px;line-height:10px;transform:scaleX(0.8000);transform-origin:0 0;letter-spacing:0.43px;color:#444;">Автовысота в таблице</div>
<div class="cb" style="left:693px;top:328px"></div>
<div class="t " style="left:594px;top:340px;font-size:9.2px;line-height:10px;transform:scaleX(0.8000);transform-origin:0 0;letter-spacing:0.43px;color:#444;">Фиксация в таблице</div>
<div class="inp" style="left:692px;top:339px;width:122px;height:14px"></div>
<div style="position:absolute;left:800px;top:340px;width:1px;height:12px;background:#d2d2d2"></div>
<svg style="left:805px;top:344px" width="4" height="3" viewBox="0 0 4 3"><path d="M0.2 0.4H3.8L2 2.3Z" fill="#333"/></svg>
<div class="t " style="left:695px;top:340px;font-size:9.2px;line-height:10px;transform:scaleX(0.8000);transform-origin:0 0;letter-spacing:0.43px;color:#333;">Нет</div>
<div style="position:absolute;left:593px;top:358px;width:219px;height:1px;background:#ececec"></div>
<div class="t " style="left:594px;top:366px;font-size:9.2px;line-height:10px;transform:scaleX(0.8000);transform-origin:0 0;letter-spacing:0.43px;color:#444;">Ширина</div>
<div class="inp" style="left:625px;top:363px;width:49px;height:14px"></div>
<div style="position:absolute;left:660px;top:364px;width:1px;height:12px;background:#cfcfcf"></div>
<div style="position:absolute;left:661px;top:370px;width:12px;height:1px;background:#cfcfcf"></div>
<div style="position:absolute;left:666px;top:367px;width:1.2px;height:1.2px;background:#555"></div>
<div style="position:absolute;left:666px;top:373px;width:1.2px;height:1.2px;background:#555"></div>
<div class="t " style="right:366px;top:366px;font-size:9.2px;line-height:10px;transform:scaleX(0.8000);transform-origin:100% 0;letter-spacing:0.43px;color:#333;">0</div>
<div class="t " style="left:704px;top:366px;font-size:9.2px;line-height:10px;transform:scaleX(0.8000);transform-origin:0 0;letter-spacing:0.43px;color:#444;">Высота</div>
<div class="inp" style="left:735px;top:363px;width:49px;height:14px"></div>
<div style="position:absolute;left:770px;top:364px;width:1px;height:12px;background:#cfcfcf"></div>
<div style="position:absolute;left:771px;top:370px;width:12px;height:1px;background:#cfcfcf"></div>
<div style="position:absolute;left:776px;top:367px;width:1.2px;height:1.2px;background:#555"></div>
<div style="position:absolute;left:776px;top:373px;width:1.2px;height:1.2px;background:#555"></div>
<div class="t " style="right:256px;top:366px;font-size:9.2px;line-height:10px;transform:scaleX(0.8000);transform-origin:100% 0;letter-spacing:0.43px;color:#333;">0</div>
<div style="position:absolute;left:587px;top:393px;width:228px;height:1px;background:#a9a9a9"></div>
<div class="btn" style="left:649px;top:431px;width:53px;height:14px"></div>
<div class="t " style="left:670.5px;top:434px;font-size:9.2px;line-height:10px;transform:scaleX(0.8000);transform-origin:0 0;letter-spacing:0.43px;color:#444;">OK</div>
<div class="btn" style="left:707px;top:431px;width:53px;height:14px"></div>
<div class="t " style="left:720.5px;top:434px;font-size:9.2px;line-height:10px;transform:scaleX(0.8000);transform-origin:0 0;letter-spacing:0.43px;color:#444;">Отмена</div>
<div class="btn" style="left:764px;top:431px;width:53px;height:14px;box-shadow:0 1px 1px rgba(0,0,0,.06);border-color:#e2e2e2;background:#fafafa"></div>
<div class="t " style="left:771px;top:434px;font-size:9.2px;line-height:10px;transform:scaleX(0.8000);transform-origin:0 0;letter-spacing:0.43px;color:#c4c4c4;">Применить</div>
</body></html>
